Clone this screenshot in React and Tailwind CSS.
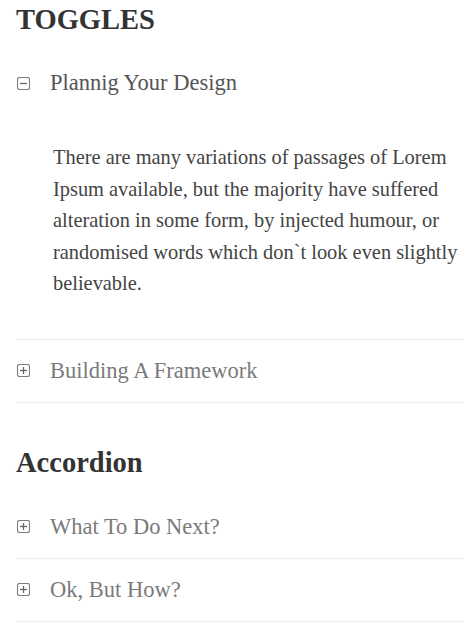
import React, { useState } from "react";

const serif = { fontFamily: '"Liberation Serif", "Times New Roman", serif' };

const BoxIcon = ({ open }) => (
  <svg width="13" height="13" viewBox="0 0 13 13" className="shrink-0">
    <rect x="0.5" y="0.5" width="12" height="12" rx="2" fill="none" stroke="#7d7d7d" strokeWidth="1.1" />
    <line x1="3" y1="6.5" x2="10" y2="6.5" stroke="#666" strokeWidth="1.3" />
    {!open && <line x1="6.5" y1="3" x2="6.5" y2="10" stroke="#666" strokeWidth="1.3" />}
  </svg>
);

const Item = ({ title, body, open, onToggle }) => (
  <div className="border-b border-[#ececec]">
    <button
      onClick={onToggle}
      className="flex w-full items-center gap-[20px] py-4 pl-[1px] text-left"
    >
      <BoxIcon open={open} />
      <span
        className={`text-[22.5px] leading-[30px] ${open ? "text-[#555]" : "text-[#7a7a7a]"}`}
      >
        {title}
      </span>
    </button>
    {open && body && (
      <p className="pl-[37px] pt-[28px] pb-[39px] text-[20.4px] leading-[31.5px] text-[#444]">
        {body}
      </p>
    )}
  </div>
);

const lorem =
  "There are many variations of passages of Lorem Ipsum available, but the majority have suffered alteration in some form, by injected humour, or randomised words which don`t look even slightly believable.";

export default function App() {
  const [toggles, setToggles] = useState({ 0: true });
  const [active, setActive] = useState(null);

  const toggleItems = ["Plannig Your Design", "Building A Framework"];
  const accordionItems = ["What To Do Next?", "Ok, But How?"];

  return (
    <div className="min-h-screen w-full bg-white pl-4" style={serif}>
      <h2 className="text-[28.5px] font-bold leading-[40px] text-[#333]">TOGGLES</h2>
      <div className="mt-3">
        {toggleItems.map((t, i) => (
          <Item
            key={t}
            title={t}
            body={lorem}
            open={!!toggles[i]}
            onToggle={() => setToggles((s) => ({ ...s, [i]: !s[i] }))}
          />
        ))}
      </div>

      <h2 className="mt-[40px] text-[28.5px] font-bold leading-[40px] text-[#333]">Accordion</h2>
      <div className="mt-[13px]">
        {accordionItems.map((t, i) => (
          <Item
            key={t}
            title={t}
            body={lorem}
            open={active === i}
            onToggle={() => setActive(active === i ? null : i)}
          />
        ))}
      </div>
    </div>
  );
}
